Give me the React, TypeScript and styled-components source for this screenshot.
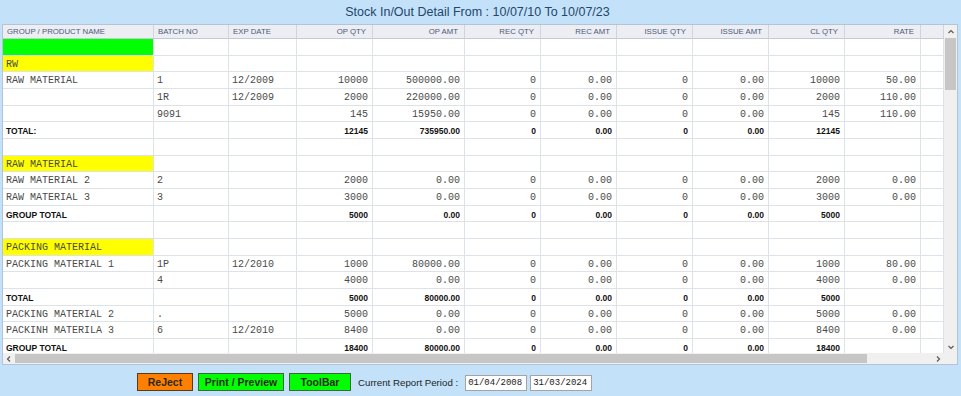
import React from "react"
import styled, { createGlobalStyle } from "styled-components"

const GlobalStyle = createGlobalStyle`
    html, body {
        margin: 0;
        padding: 0;
        background: #c3e2fa;
    }
    * {
        box-sizing: border-box;
    }
`

const COLS = "151px 75px 68px 76px 92px 76px 76px 76px 76px 76px 76px 1fr"

type Align = "left" | "right"

interface RowData {
    cells: string[],
    kind?: "item" | "total" | "group" | "marker" | "blank"
}

const headers: { label: string, align: Align }[] = [
    { label: "GROUP / PRODUCT NAME", align: "left" },
    { label: "BATCH NO", align: "left" },
    { label: "EXP DATE", align: "left" },
    { label: "OP QTY", align: "right" },
    { label: "OP AMT", align: "right" },
    { label: "REC QTY", align: "right" },
    { label: "REC AMT", align: "right" },
    { label: "ISSUE QTY", align: "right" },
    { label: "ISSUE AMT", align: "right" },
    { label: "CL QTY", align: "right" },
    { label: "RATE", align: "right" },
]

const rows: RowData[] = [
    { kind: "marker", cells: [""] },
    { kind: "group", cells: ["RW"] },
    { cells: ["RAW MATERIAL", "1", "12/2009", "10000", "500000.00", "0", "0.00", "0", "0.00", "10000", "50.00"] },
    { cells: ["", "1R", "12/2009", "2000", "220000.00", "0", "0.00", "0", "0.00", "2000", "110.00"] },
    { cells: ["", "9091", "", "145", "15950.00", "0", "0.00", "0", "0.00", "145", "110.00"] },
    { kind: "total", cells: ["TOTAL:", "", "", "12145", "735950.00", "0", "0.00", "0", "0.00", "12145", ""] },
    { kind: "blank", cells: [] },
    { kind: "group", cells: ["RAW MATERIAL"] },
    { cells: ["RAW MATERIAL 2", "2", "", "2000", "0.00", "0", "0.00", "0", "0.00", "2000", "0.00"] },
    { cells: ["RAW MATERIAL 3", "3", "", "3000", "0.00", "0", "0.00", "0", "0.00", "3000", "0.00"] },
    { kind: "total", cells: ["GROUP TOTAL", "", "", "5000", "0.00", "0", "0.00", "0", "0.00", "5000", ""] },
    { kind: "blank", cells: [] },
    { kind: "group", cells: ["PACKING MATERIAL"] },
    { cells: ["PACKING MATERIAL 1", "1P", "12/2010", "1000", "80000.00", "0", "0.00", "0", "0.00", "1000", "80.00"] },
    { cells: ["", "4", "", "4000", "0.00", "0", "0.00", "0", "0.00", "4000", "0.00"] },
    { kind: "total", cells: ["TOTAL", "", "", "5000", "80000.00", "0", "0.00", "0", "0.00", "5000", ""] },
    { cells: ["PACKING MATERIAL 2", ".", "", "5000", "0.00", "0", "0.00", "0", "0.00", "5000", "0.00"] },
    { cells: ["PACKINH MATERILA 3", "6", "12/2010", "8400", "0.00", "0", "0.00", "0", "0.00", "8400", "0.00"] },
    { kind: "total", cells: ["GROUP TOTAL", "", "", "18400", "80000.00", "0", "0.00", "0", "0.00", "18400", ""] },
]

const Page = styled.div`
    width: 961px;
    height: 396px;
    display: flex;
    flex-direction: column;
    overflow: hidden;
`

const Title = styled.div`
    height: 24px;
    display: flex;
    align-items: center;
    justify-content: center;
    padding-right: 6px;
    font-family: "Liberation Sans", Arial, sans-serif;
    font-size: 12.5px;
    color: #24466a;
`

const Panel = styled.div`
    margin: 0 3px 0 2px;
    height: 341px;
    border: 1px solid #b4c4d4;
    background: #ffffff;
    display: grid;
    grid-template-columns: 1fr 13px;
    grid-template-rows: 1fr 11px;
`

const Viewport = styled.div`
    overflow: hidden;
    position: relative;
`

const Row = styled.div`
    display: grid;
    grid-template-columns: ${COLS};
    height: 16.67px;
`

const HeadRow = styled(Row)`
    height: 14px;
    background: #eceef4;
`

const HeadCell = styled.div<{ $align: Align }>`
    border-right: 1px solid #cfd4de;
    border-bottom: 1px solid #c4c9d6;
    padding: 0 ${(p) => p.$align === "right" ? "6px" : "4px"};
    text-align: ${(p) => p.$align};
    font-family: "Liberation Sans", Arial, sans-serif;
    font-size: 7.8px;
    line-height: 14px;
    color: #4d5a78;
    white-space: nowrap;
    overflow: hidden;
`

const Cell = styled.div<{ $align: Align, $bold?: boolean, $fill?: string }>`
    border-right: 1px solid #dde1e8;
    border-bottom: 1px solid #dde1e8;
    padding: 1px ${(p) => p.$align === "right" ? "4px" : "3px"} 0;
    text-align: ${(p) => p.$align};
    background: ${(p) => p.$fill ?? "transparent"};
    font-family: ${(p) => p.$bold ? `"Liberation Sans", Arial, sans-serif` : `"Liberation Mono", "Courier New", monospace`};
    font-weight: ${(p) => p.$bold ? 700 : 400};
    font-size: ${(p) => p.$bold ? "8.5px" : "10px"};
    line-height: 16px;
    color: ${(p) => p.$bold ? "#111111" : "#4a4a4a"};
    white-space: nowrap;
    overflow: hidden;
`

const VScroll = styled.div`
    background: #f0f0f0;
    display: flex;
    flex-direction: column;
    align-items: center;
    padding: 0 1px;
`

const ArrowBox = styled.div`
    height: 13px;
    width: 100%;
    display: flex;
    align-items: center;
    justify-content: center;
    flex-shrink: 0;
`

const VThumb = styled.div`
    width: 100%;
    height: 52px;
    background: #c6c6c6;
`

const VSpacer = styled.div`
    flex: 1;
`

const HScroll = styled.div`
    background: #f0f0f0;
    display: flex;
    align-items: center;
    padding: 1px 0;
`

const HArrow = styled.div`
    width: 12px;
    height: 100%;
    display: flex;
    align-items: center;
    justify-content: center;
    flex-shrink: 0;
`

const HThumb = styled.div`
    width: 852px;
    height: 100%;
    background: #c6c6c6;
`

const Corner = styled.div`
    background: #f0f0f0;
`

const Footer = styled.div`
    flex: 1;
    display: flex;
    align-items: center;
    padding: 3px 0 0 137px;
`

const Button = styled.div<{ $color: string, $border: string, $width: number }>`
    width: ${(p) => p.$width}px;
    height: 18px;
    margin-right: 5px;
    background: ${(p) => p.$color};
    border: 1px solid ${(p) => p.$border};
    display: flex;
    align-items: center;
    justify-content: center;
    font-family: "Liberation Sans", Arial, sans-serif;
    font-weight: 700;
    font-size: 10.5px;
    color: #2a2a1a;
`

const PeriodLabel = styled.span`
    margin-left: 2px;
    margin-right: 7px;
    font-family: "Liberation Sans", Arial, sans-serif;
    font-size: 9.7px;
    color: #222;
`

const DateBox = styled.div`
    width: 62px;
    height: 16px;
    margin-right: 3px;
    margin-top: 2px;
    background: #fff;
    border: 1px solid #a4a4a4;
    display: flex;
    align-items: center;
    padding-left: 2px;
    font-family: "Liberation Mono", "Courier New", monospace;
    font-size: 9px;
    color: #222;
`

const Chevron = ({ dir }: { dir: "up" | "down" | "left" | "right" }) => {
    const pts = {
        up: "1.5,5 4,2.5 6.5,5",
        down: "1.5,3 4,5.5 6.5,3",
        left: "5,1.5 2.5,4 5,6.5",
        right: "3,1.5 5.5,4 3,6.5",
    }[dir]
    return (
        <svg width="8" height="8" viewBox="0 0 8 8">
            <polyline points={pts} fill="none" stroke="#5a5a5a" strokeWidth="1.2" />
        </svg>
    )
}

const fillFor = (kind: RowData["kind"]) => {
    if (kind === "marker") return "#00ff00"
    if (kind === "group") return "#ffff00"
    return undefined
}

const App = () => {
    return (
        <Page>
            <GlobalStyle />
            <Title>Stock In/Out Detail From : 10/07/10 To 10/07/23</Title>
            <Panel>
                <Viewport>
                    <HeadRow>
                        {headers.map((h) => (
                            <HeadCell key={h.label} $align={h.align}>{h.label}</HeadCell>
                        ))}
                        <HeadCell $align="left" />
                    </HeadRow>
                    {rows.map((r, i) => (
                        <Row key={i}>
                            {headers.map((h, c) => (
                                <Cell
                                    key={c}
                                    $align={h.align}
                                    $bold={r.kind === "total"}
                                    $fill={c === 0 ? fillFor(r.kind) : undefined}
                                >
                                    {r.cells[c] ?? ""}
                                </Cell>
                            ))}
                            <Cell $align="left" />
                        </Row>
                    ))}
                </Viewport>
                <VScroll>
                    <ArrowBox><Chevron dir="up" /></ArrowBox>
                    <VThumb />
                    <VSpacer />
                    <ArrowBox><Chevron dir="down" /></ArrowBox>
                </VScroll>
                <HScroll>
                    <HArrow><Chevron dir="left" /></HArrow>
                    <HThumb />
                    <VSpacer />
                    <HArrow><Chevron dir="right" /></HArrow>
                </HScroll>
                <Corner />
            </Panel>
            <Footer>
                <Button $color="#ff8000" $border="#5a3a1a" $width={56}>ReJect</Button>
                <Button $color="#00ff00" $border="#3a6a3a" $width={86}>Print / Preview</Button>
                <Button $color="#00ff00" $border="#3a6a3a" $width={62}>ToolBar</Button>
                <PeriodLabel>Current Report Period :</PeriodLabel>
                <DateBox>01/04/2008</DateBox>
                <DateBox>31/03/2024</DateBox>
            </Footer>
        </Page>
    )
}

export default App
